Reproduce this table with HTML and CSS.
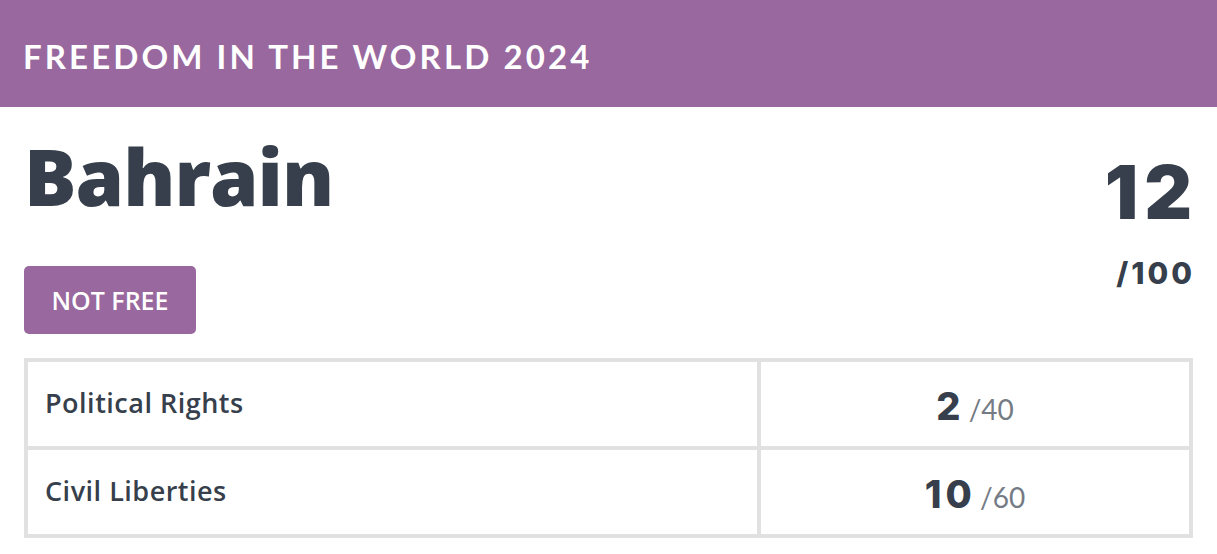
FILE: index.html
```html
<!DOCTYPE html>
<html>
<head>
<meta charset="utf-8">
<link rel="stylesheet" href="styles.css">
</head>
<body>
<header class="banner">
  <h2 class="banner-title">FREEDOM IN THE WORLD 2024</h2>
</header>
<main class="content">
  <section class="summary">
    <div class="country">
      <h1 class="country-name">Bahrain</h1>
      <span class="status">NOT FREE</span>
    </div>
    <div class="total">
      <div class="total-score">12</div>
      <div class="total-max">/100</div>
    </div>
  </section>
  <table class="scores">
    <tr>
      <td class="label">Political Rights</td>
      <td class="value"><span class="num">2</span> <span class="max">/40</span></td>
    </tr>
    <tr>
      <td class="label">Civil Liberties</td>
      <td class="value"><span class="num">10</span> <span class="max">/60</span></td>
    </tr>
  </table>
</main>
</body>
</html>
```

FILE: styles.css
```css
html, body {
  margin: 0;
  padding: 0;
  background: #fff;
}
body {
  font-family: "Open Sans", "Liberation Sans", sans-serif;
  color: #363f4b;
}
.banner {
  background: #98689e;
  height: 107px;
  display: flex;
  align-items: center;
  padding: 0 23px;
  box-sizing: border-box;
}
.banner-title {
  margin: 0;
  color: #fff;
  font-family: "Lato", sans-serif;
  font-weight: 700;
  font-size: 33px;
  letter-spacing: 3.1px;
  padding-top: 4px;
}
.content {
  padding: 0 24px;
}
.summary {
  display: flex;
  justify-content: space-between;
  align-items: flex-start;
}
.country {
  display: flex;
  flex-direction: column;
  align-items: flex-start;
}
.country-name {
  margin: 0;
  font-family: "Open Sans", sans-serif;
  font-weight: 800;
  font-size: 78px;
  line-height: 1;
  padding-top: 30px;
  letter-spacing: -1px;
}
.status {
  margin-top: 51px;
  background: #98689e;
  color: #fff;
  font-family: "Open Sans", sans-serif;
  font-weight: 600;
  font-size: 25px;
  border-radius: 5px;
  width: 172px;
  height: 68px;
  display: flex;
  align-items: center;
  justify-content: center;
  box-sizing: border-box;
}
.total {
  text-align: right;
}
.total-score {
  font-family: "Inter", sans-serif;
  font-weight: 900;
  font-size: 74px;
  line-height: 1;
  margin-top: 48px;
  letter-spacing: 6px;
  margin-right: -5px;
}
.total-max {
  font-family: "Inter", sans-serif;
  font-weight: 800;
  font-size: 30px;
  margin-top: 26px;
  letter-spacing: 3px;
  margin-right: -2px;
}
.scores {
  margin-top: 24px;
  width: 1169px;
  border-collapse: collapse;
  border: 4px solid #e1e1e1;
}
.scores td {
  border: 4px solid #e1e1e1;
  height: 80px;
}
.label {
  width: 712px;
  padding: 0 0 4px 17px;
  font-family: "Open Sans", sans-serif;
  font-weight: 600;
  font-size: 27px;
  letter-spacing: 0.5px;
}
.value {
  text-align: center;
  padding: 4px 0 0 0;
}
.num {
  font-family: "Inter", sans-serif;
  font-weight: 800;
  font-size: 38px;
  letter-spacing: 4px;
}
.max {
  font-family: "Lato", sans-serif;
  font-size: 28px;
  color: #757b85;
}
```
